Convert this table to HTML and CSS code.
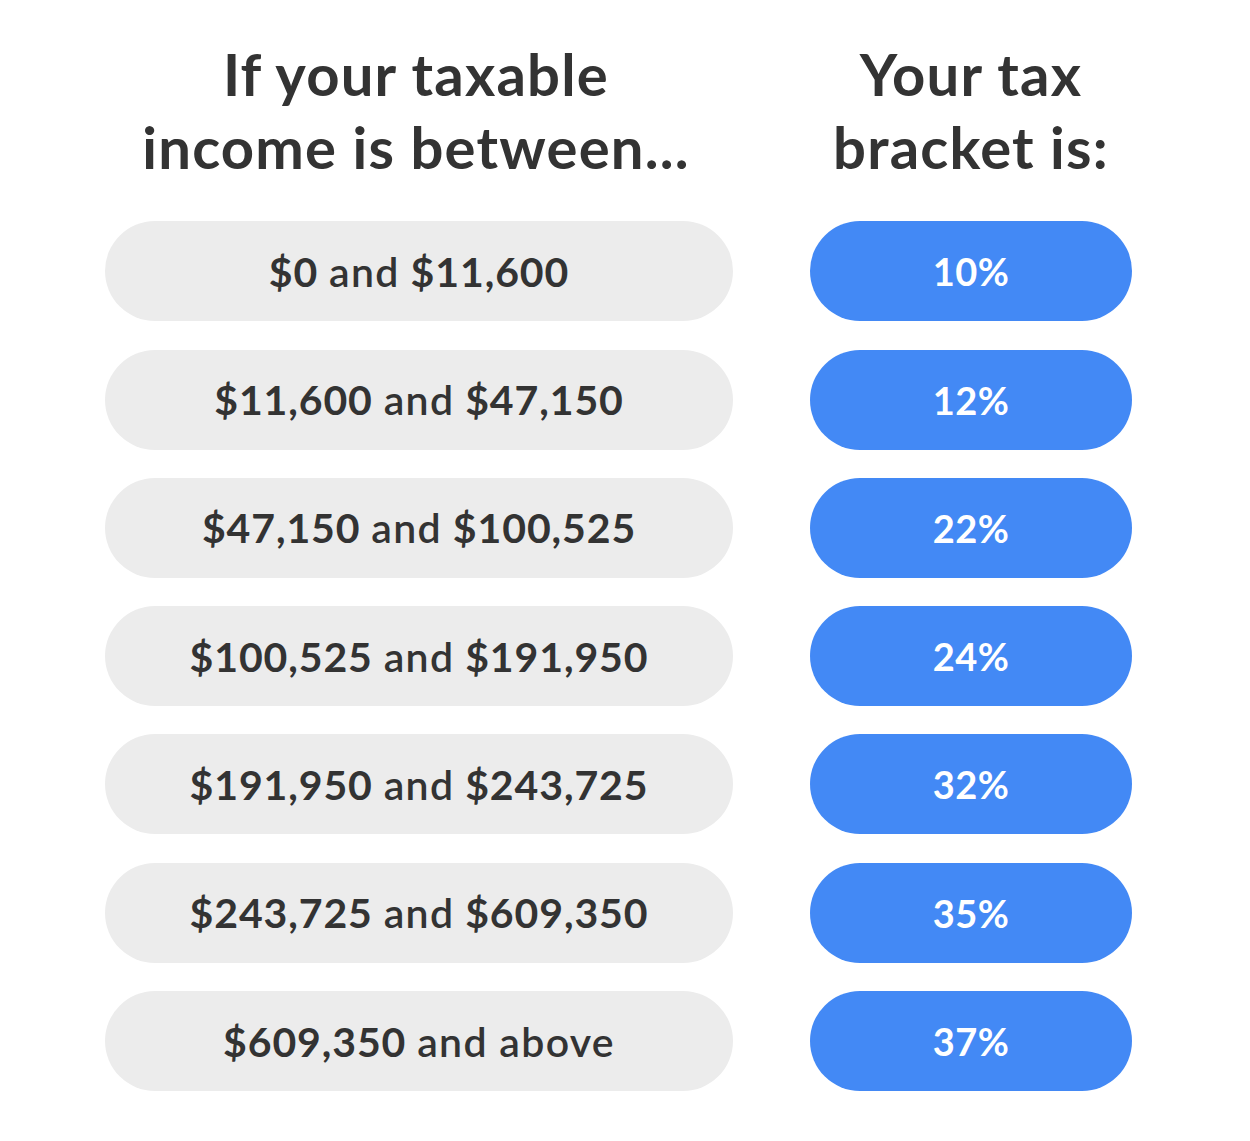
FILE: index.html
```html
<!DOCTYPE html>
<html>
<head>
<meta charset="utf-8">
<link rel="stylesheet" href="styles.css">
</head>
<body>
<main class="table">
  <h2 class="head head-left">If your taxable<br>income is between...</h2>
  <h2 class="head head-right">Your tax<br>bracket is:</h2>

  <div class="pill range"><span><b>$0</b> <span class="and">and</span> <b>$11,600</b></span></div>
  <div class="pill rate">10%</div>

  <div class="pill range"><span><b>$11,600</b> <span class="and">and</span> <b>$47,150</b></span></div>
  <div class="pill rate">12%</div>

  <div class="pill range"><span><b>$47,150</b> <span class="and">and</span> <b>$100,525</b></span></div>
  <div class="pill rate">22%</div>

  <div class="pill range"><span><b>$100,525</b> <span class="and">and</span> <b>$191,950</b></span></div>
  <div class="pill rate">24%</div>

  <div class="pill range"><span><b>$191,950</b> <span class="and">and</span> <b>$243,725</b></span></div>
  <div class="pill rate">32%</div>

  <div class="pill range"><span><b>$243,725</b> <span class="and">and</span> <b>$609,350</b></span></div>
  <div class="pill rate">35%</div>

  <div class="pill range"><span><b>$609,350</b> <span class="and">and above</span></span></div>
  <div class="pill rate">37%</div>
</main>
</body>
</html>
```
FILE: styles.css
```css
html, body {
  margin: 0;
  padding: 0;
  background: #ffffff;
}
body {
  font-family: "Lato", "Liberation Sans", sans-serif;
  color: #333333;
}
.table {
  display: grid;
  grid-template-columns: 628px 322px;
  column-gap: 77px;
  row-gap: 28.3px;
  padding: 37px 0 0 105px;
}
.head {
  margin: 0 0 10px 0;
  font-size: 58px;
  line-height: 73px;
  font-weight: 700;
  text-align: center;
  letter-spacing: 1.2px;
}
.head-left { justify-self: center; margin-left: -6px; }
.pill {
  height: 100px;
  border-radius: 50px;
  display: flex;
  align-items: center;
  justify-content: center;
  font-weight: 700;
}
.range {
  background: #ececec;
  color: #333333;
  font-size: 41px;
  letter-spacing: 0.9px;
  white-space: pre;
}
.range b { font-weight: 700; }
.range .and { font-weight: 600; letter-spacing: 1.3px; }
.rate {
  background: #4389f5;
  color: #ffffff;
  font-size: 38px;
  letter-spacing: 0.5px;
}
```
